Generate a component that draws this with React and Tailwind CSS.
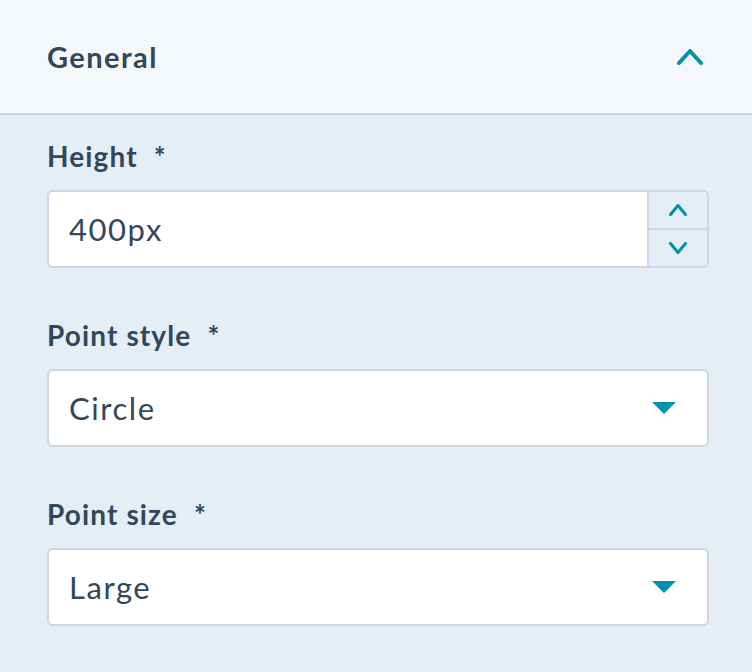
import { useState } from "react";

const Caret = () => (
  <svg width="24" height="12" viewBox="0 0 24 12" className="shrink-0">
    <path d="M0 0 L24 0 L12 12 Z" fill="#0091ae" />
  </svg>
);

const Chevron = ({ up, w = 18, h = 9, stroke = 3 }) => (
  <svg width={w} height={h + stroke} viewBox={`0 0 ${w} ${h + stroke}`}>
    <path
      d={
        up
          ? `M${stroke / 2} ${h + stroke / 2} L${w / 2} ${stroke / 2} L${w - stroke / 2} ${h + stroke / 2}`
          : `M${stroke / 2} ${stroke / 2} L${w / 2} ${h + stroke / 2} L${w - stroke / 2} ${stroke / 2}`
      }
      fill="none"
      stroke="#0091ae"
      strokeWidth={stroke}
      strokeLinecap="round"
      strokeLinejoin="round"
    />
  </svg>
);

const Label = ({ children }) => (
  <label className="block h-[36px] text-[28px] leading-[36px] font-bold tracking-[0.04em] text-[#33475b]">
    {children}
    <span className="ml-[16px]">*</span>
  </label>
);

const SelectBox = ({ value }) => (
  <div className="mt-4 h-[78px] flex items-center justify-between bg-white border-2 border-[#cbd6e2] rounded-md pl-5 pr-[31px]">
    <span className="text-[31px] tracking-[0.05em] text-[#33475b]">{value}</span>
    <Caret />
  </div>
);

export default function App() {
  const [height] = useState("400px");

  return (
    <div
      className="w-[752px] h-[672px] bg-[#e5edf5] overflow-hidden"
      style={{ fontFamily: "Lato, 'Noto Sans', sans-serif" }}
    >
      <div className="h-[115px] bg-[#f5f8fa] border-b-2 border-[#cbd6e2] flex items-center justify-between pl-[47px] pr-[49px]">
        <h2 className="text-[29px] font-bold tracking-[0.05em] text-[#33475b]">General</h2>
        <Chevron up w={26} h={12} stroke={4} />
      </div>

      <div className="pl-[47px] pr-[43px] pt-[23px] flex flex-col gap-[49px]">
        <div>
          <Label>Height</Label>
          <div className="mt-4 h-[78px] flex bg-white border-2 border-[#cbd6e2] rounded-md overflow-hidden">
            <div className="flex-1 flex items-center pl-5 text-[31px] tracking-[0.05em] text-[#33475b]">
              {height}
            </div>
            <div className="w-[60px] flex flex-col border-l-2 border-[#cbd6e2] bg-[#e5edf5]">
              <div className="flex-1 flex items-center justify-center border-b-2 border-[#cbd6e2]">
                <Chevron up />
              </div>
              <div className="flex-1 flex items-center justify-center">
                <Chevron />
              </div>
            </div>
          </div>
        </div>

        <div>
          <Label>Point style</Label>
          <SelectBox value="Circle" />
        </div>

        <div>
          <Label>Point size</Label>
          <SelectBox value="Large" />
        </div>
      </div>
    </div>
  );
}
